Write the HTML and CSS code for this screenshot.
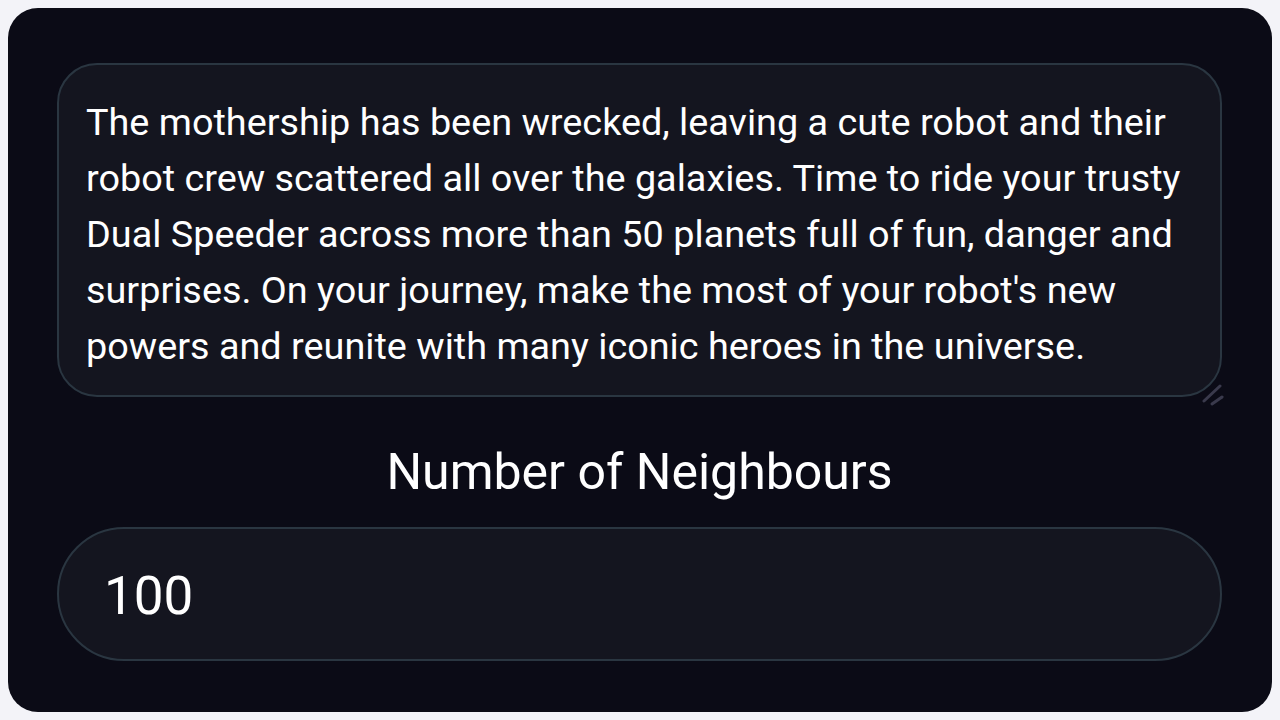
FILE: index.html
```
<!DOCTYPE html>
<html>
<head>
<meta charset="utf-8">
<link rel="stylesheet" href="styles.css">
</head>
<body>
<div class="card">
<div class="desc-wrap">
<textarea class="desc">The mothership has been wrecked, leaving a cute robot and their robot crew scattered all over the galaxies. Time to ride your trusty Dual Speeder across more than 50 planets full of fun, danger and surprises. On your journey, make the most of your robot's new powers and reunite with many iconic heroes in the universe.</textarea>
<svg class="grip" width="24" height="24" viewBox="0 0 24 24"><path d="M2 18 L18 3" stroke="#3a3a4c" stroke-width="3" stroke-linecap="round"/><path d="M10 21 L20 14" stroke="#3a3a4c" stroke-width="3" stroke-linecap="round"/></svg>
</div>
<label class="label" for="n">Number of Neighbours</label>
<input id="n" class="num" type="text" value="100">
</div>
</body>
</html>
```
FILE: styles.css
```
html, body {
  margin: 0;
  padding: 0;
  background: #f3f3f8;
}
body {
  width: 1280px;
  height: 720px;
  padding: 8px;
  box-sizing: border-box;
}
.card {
  height: 704px;
  box-sizing: border-box;
  background: #0b0b16;
  border-radius: 30px;
  padding: 55px 50px 0 49px;
  display: flex;
  flex-direction: column;
  align-items: stretch;
  font-family: Roboto, "Noto Sans", sans-serif;
  color: #ffffff;
}
.desc-wrap {
  position: relative;
}
.desc {
  display: block;
  width: 100%;
  height: 334px;
  box-sizing: border-box;
  background: #14151f;
  border: 2px solid #2a3641;
  border-radius: 40px;
  padding: 29px 22px 0 27px;
  font-family: Roboto, "Noto Sans", sans-serif;
  font-size: 37.8px;
  line-height: 56px;
  color: #ffffff;
  resize: none;
  outline: none;
  overflow: hidden;
  margin: 0;
}
.grip {
  position: absolute;
  right: -4px;
  bottom: -10px;
}
.label {
  display: block;
  text-align: center;
  font-size: 50px;
  line-height: 60px;
  margin-top: 45px;
  margin-bottom: 25px;
}
.num {
  display: block;
  height: 134px;
  box-sizing: border-box;
  background: #14151f;
  border: 2px solid #2a3641;
  border-radius: 67px;
  padding: 4px 45px 0;
  font-family: Roboto, "Noto Sans", sans-serif;
  font-size: 53px;
  color: #ffffff;
  outline: none;
  margin: 0;
}
```
